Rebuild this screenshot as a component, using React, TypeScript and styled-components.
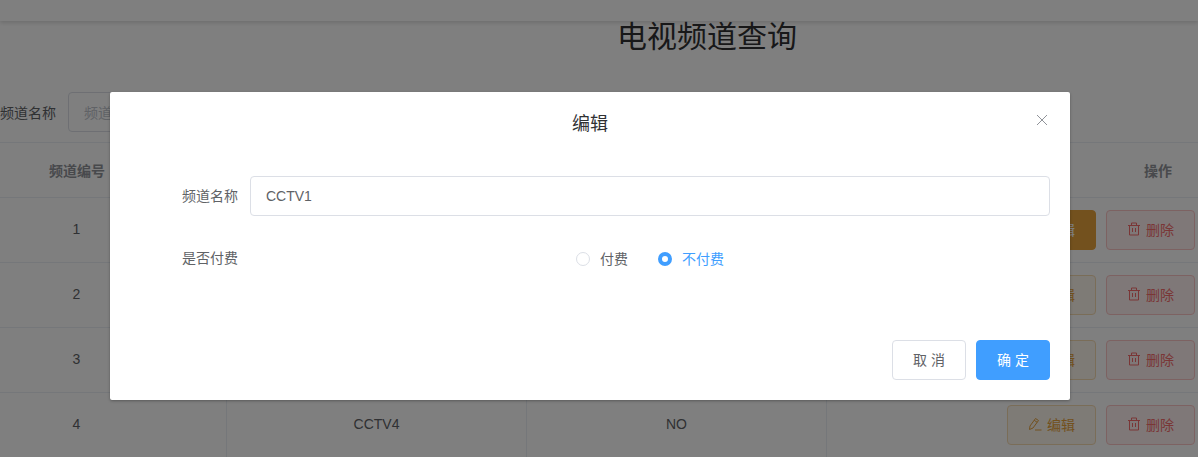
import {createGlobalStyle} from 'styled-components';
import styled from 'styled-components';

const GlobalStyle = createGlobalStyle`
  html, body {
    background: #fff;
    height: 457px;
    margin: 0;
    overflow: hidden;
    width: 1198px;
  }

  body {
    font-family: "Liberation Sans", "Noto Sans CJK SC", sans-serif;
  }
`;

const Page = styled.div`
  height: 457px;
  overflow: hidden;
  position: relative;
  width: 1198px;
`;

const TopBar = styled.header`
  box-shadow: 0 2px 4px rgb(0 0 0 / 14%);
  height: 21px;
`;

const Content = styled.main`
  margin-left: -74px;
  width: 1562px;
`;

const Title = styled.h1`
  color: #303133;
  font-size: 30px;
  font-weight: 400;
  line-height: 32px;
  margin: 0;
  text-align: center;
`;

const FilterRow = styled.div`
  align-items: center;
  display: flex;
  gap: 12px;
  height: 40px;
  margin-top: 39px;
  padding-left: 74px;
`;

const FilterLabel = styled.label`
  color: #606266;
  font-size: 14px;
`;

const FilterInput = styled.div`
  align-items: center;
  border: 1px solid #dcdfe6;
  border-radius: 4px;
  box-sizing: border-box;
  color: #c0c4cc;
  display: flex;
  font-size: 14px;
  height: 40px;
  padding-left: 15px;
  width: 220px;
`;

const Table = styled.div`
  border-top: 1px solid #ebeef5;
  display: grid;
  grid-template-columns: 300px 300px 300px 662px;
  margin-left: 1px;
  margin-top: 10px;
`;

const HeadCell = styled.div`
  align-items: center;
  border-bottom: 1px solid #ebeef5;
  box-sizing: border-box;
  color: #909399;
  display: flex;
  font-size: 14px;
  font-weight: 700;
  height: 55px;
  justify-content: center;
`;

const Cell = styled.div`
  align-items: center;
  border-bottom: 1px solid #ebeef5;
  border-right: 1px solid #ebeef5;
  box-sizing: border-box;
  color: #606266;
  display: flex;
  font-size: 14px;
  height: 65px;
  justify-content: center;
  padding-bottom: 2px;
`;

const ActionCell = styled(Cell)`
  border-right: 0;
  gap: 10px;
  justify-content: flex-start;
  padding-bottom: 0;
  padding-left: 180px;
`;

const ActionButton = styled.button<{$tone: 'edit' | 'editActive' | 'delete'}>`
  align-items: center;
  background: ${({$tone}) => ({edit: '#fdf6ec', editActive: '#e6a23c', delete: '#fef0f0'})[$tone]};
  border: 1px solid ${({$tone}) => ({edit: '#f5dab1', editActive: '#e6a23c', delete: '#fbc4c4'})[$tone]};
  border-radius: 4px;
  box-sizing: border-box;
  color: ${({$tone}) => ({edit: '#e6a23c', editActive: '#fff', delete: '#f56c6c'})[$tone]};
  display: flex;
  font-family: inherit;
  font-size: 14px;
  gap: 5px;
  height: 40px;
  justify-content: center;
  padding: 0 0 2px;
  width: 89px;
`;

const Overlay = styled.div`
  background: rgb(0 0 0 / 50%);
  inset: 0;
  position: absolute;
`;

const Dialog = styled.section`
  background: #fff;
  border-radius: 2px;
  box-shadow: 0 1px 3px rgb(0 0 0 / 30%);
  box-sizing: border-box;
  height: 308px;
  left: 110px;
  position: absolute;
  top: 92px;
  width: 960px;
`;

const DialogHeader = styled.div`
  color: #303133;
  font-size: 18px;
  line-height: 24px;
  padding: 20px 20px 10px;
  position: relative;
  text-align: center;
`;

const CloseButton = styled.button`
  background: none;
  border: 0;
  color: #909399;
  display: flex;
  padding: 0;
  position: absolute;
  right: 22px;
  top: 22px;
`;

const DialogBody = styled.div`
  display: flex;
  flex-direction: column;
  gap: 22px;
  padding: 30px 20px 0;
`;

const FormRow = styled.div`
  align-items: center;
  display: flex;
  height: 40px;
`;

const FormLabel = styled.label`
  box-sizing: border-box;
  color: #606266;
  font-size: 14px;
  padding-bottom: 2px;
  padding-right: 12px;
  text-align: right;
  width: 120px;
`;

const FormInput = styled.input`
  border: 1px solid #dcdfe6;
  border-radius: 4px;
  box-sizing: border-box;
  color: #606266;
  flex: 1;
  font-family: inherit;
  font-size: 14px;
  height: 40px;
  outline: none;
  padding: 0 15px;
`;

const RadioGroup = styled.div`
  align-items: center;
  display: flex;
  flex: 1;
  gap: 30px;
  justify-content: center;
  padding-top: 1px;
`;

const RadioOption = styled.span<{$checked?: boolean}>`
  align-items: center;
  color: ${({$checked}) => ($checked ? '#409eff' : '#606266')};
  display: flex;
  font-size: 14px;
  gap: 10px;
`;

const RadioText = styled.span`
  padding-bottom: 2px;
`;

const RadioDot = styled.span<{$checked?: boolean}>`
  background: #fff;
  border: ${({$checked}) => ($checked ? '4px solid #409eff' : '1px solid #dcdfe6')};
  border-radius: 50%;
  box-sizing: border-box;
  height: 14px;
  width: 14px;
`;

const DialogFooter = styled.div`
  display: flex;
  gap: 10px;
  justify-content: flex-end;
  padding: 62px 20px 0;
`;

const FooterButton = styled.button<{$primary?: boolean}>`
  background: ${({$primary}) => ($primary ? '#409eff' : '#fff')};
  border: 1px solid ${({$primary}) => ($primary ? '#409eff' : '#dcdfe6')};
  border-radius: 4px;
  box-sizing: border-box;
  color: ${({$primary}) => ($primary ? '#fff' : '#606266')};
  font-family: inherit;
  font-size: 14px;
  height: 40px;
  padding: 0 0 2px;
  white-space: pre;
  width: 74px;
`;

const EditIcon = () => (
  <svg width="14" height="14" viewBox="0 0 14 14" fill="none" stroke="currentColor" strokeWidth="1">
    <path d="M1.5 12.5 2 9 7.5 1.5 10.5 3.5 5 11Z" />
    <path d="M6.2 3.3 9.2 5.3" />
    <path d="M7 13H13.5" />
  </svg>
);

const DeleteIcon = () => (
  <svg width="14" height="14" viewBox="0 0 14 14" fill="none" stroke="currentColor" strokeWidth="1">
    <path d="M1 3.5H13" />
    <path d="M4.5 3.5V1H9.5V3.5" />
    <path d="M2.5 3.5V13H11.5V3.5" />
    <path d="M5.5 6V10M8.5 6V10" />
  </svg>
);

const CloseIcon = () => (
  <svg width="12" height="12" viewBox="0 0 12 12" stroke="currentColor" strokeWidth="1">
    <path d="M1 1 11 11M11 1 1 11" />
  </svg>
);

const channels = [
  {id: 1, name: 'CCTV1', paid: 'NO'},
  {id: 2, name: 'CCTV2', paid: 'YES'},
  {id: 3, name: 'CCTV3', paid: 'YES'},
  {id: 4, name: 'CCTV4', paid: 'NO'},
];

const App = () => (
  <Page>
    <GlobalStyle />
    <TopBar />
    <Content>
      <Title>电视频道查询</Title>
      <FilterRow>
        <FilterLabel>频道名称</FilterLabel>
        <FilterInput>频道名称</FilterInput>
      </FilterRow>
      <Table>
        <HeadCell>频道编号</HeadCell>
        <HeadCell>频道名称</HeadCell>
        <HeadCell>是否付费</HeadCell>
        <HeadCell>操作</HeadCell>
        {channels.map((channel) => [
          <Cell key={`id-${channel.id}`}>{channel.id}</Cell>,
          <Cell key={`name-${channel.id}`}>{channel.name}</Cell>,
          <Cell key={`paid-${channel.id}`}>{channel.paid}</Cell>,
          <ActionCell key={`actions-${channel.id}`}>
            <ActionButton $tone={channel.id === 1 ? 'editActive' : 'edit'}>
              <EditIcon />
              编辑
            </ActionButton>
            <ActionButton $tone="delete">
              <DeleteIcon />
              删除
            </ActionButton>
          </ActionCell>,
        ])}
      </Table>
    </Content>
    <Overlay />
    <Dialog>
      <DialogHeader>
        编辑
        <CloseButton>
          <CloseIcon />
        </CloseButton>
      </DialogHeader>
      <DialogBody>
        <FormRow>
          <FormLabel>频道名称</FormLabel>
          <FormInput defaultValue="CCTV1" />
        </FormRow>
        <FormRow>
          <FormLabel>是否付费</FormLabel>
          <RadioGroup>
            <RadioOption>
              <RadioDot />
              <RadioText>付费</RadioText>
            </RadioOption>
            <RadioOption $checked>
              <RadioDot $checked />
              <RadioText>不付费</RadioText>
            </RadioOption>
          </RadioGroup>
        </FormRow>
      </DialogBody>
      <DialogFooter>
        <FooterButton>取 消</FooterButton>
        <FooterButton $primary>确 定</FooterButton>
      </DialogFooter>
    </Dialog>
  </Page>
);

export default App;
